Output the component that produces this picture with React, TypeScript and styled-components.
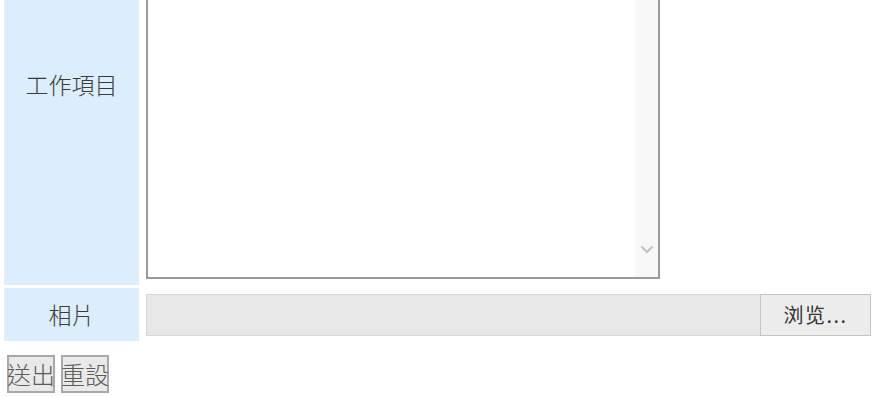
import React from "react";
import styled, { createGlobalStyle } from "styled-components";

const Global = createGlobalStyle`
  html, body { margin: 0; padding: 0; background: #ffffff; overflow: hidden; }
  body { font-family: "Noto Sans CJK TC", "Noto Sans CJK SC", "Noto Sans", sans-serif; color: #3c3c3c; }
`;

const Page = styled.div`
  margin-top: -117px;
`;

const FormGrid = styled.div`
  display: grid;
  grid-template-columns: 135px 1fr;
  grid-template-rows: 402px 53px;
  column-gap: 3px;
  row-gap: 3px;
  padding-left: 4px;
`;

const Label = styled.div`
  background: #dcedfd;
  display: flex;
  align-items: center;
  justify-content: center;
  font-size: 23px;
  font-weight: 300;
  line-height: 1;
  color: #3a3a3a;
`;

const Field = styled.div<{ $align?: string }>`
  display: flex;
  align-items: ${(p) => p.$align || "flex-start"};
  padding: 0 4px;
`;

const AreaBox = styled.div`
  width: 514px;
  height: 396px;
  box-sizing: border-box;
  border: 1px solid #9a9a9a;
  border-width: 1px 2px 2px 2px;
  display: flex;
  background: #ffffff;
`;

const Area = styled.textarea`
  flex: 1;
  border: none;
  outline: none;
  resize: none;
  background: transparent;
  overflow: hidden;
`;

const ScrollTrack = styled.div`
  width: 23px;
  background: #f8f8f8;
  display: flex;
  flex-direction: column;
  justify-content: flex-end;
  align-items: center;
  padding-bottom: 23px;
`;

const FileBox = styled.div`
  flex: 1;
  height: 42px;
  box-sizing: border-box;
  background: #e8e8e8;
  border: 1px solid #d6d6d6;
  display: flex;
  justify-content: flex-end;
`;

const BrowseButton = styled.button`
  width: 111px;
  height: 42px;
  margin: -1px -1px -1px 0;
  box-sizing: border-box;
  background: #ececec;
  border: 1px solid #c4c4c4;
  font-family: "Noto Sans CJK SC", "Noto Sans", sans-serif;
  font-size: 20px;
  letter-spacing: 1.5px;
  color: #333333;
  padding: 0;
`;

const Actions = styled.div`
  display: flex;
  gap: 6px;
  padding: 14px 0 0 7px;
`;

const ActionButton = styled.button`
  width: 48px;
  height: 38px;
  box-sizing: border-box;
  padding: 0;
  background: #e9e9e9;
  border: 2px solid #a9a9a9;
  font-family: "Noto Sans CJK TC", sans-serif;
  font-size: 24px;
  font-weight: 300;
  line-height: 1;
  color: #5a5a5a;
  overflow: visible;
  white-space: nowrap;
  display: flex;
  align-items: center;
  justify-content: center;
`;

const Chevron = () => (
  <svg width="14" height="9" viewBox="0 0 14 9">
    <path d="M1.5 1.5 L7 7 L12.5 1.5" fill="none" stroke="#c2c2c2" strokeWidth="2" />
  </svg>
);

export default function App() {
  return (
    <>
      <Global />
      <Page>
        <FormGrid>
          <Label>工作項目</Label>
          <Field>
            <AreaBox>
              <Area />
              <ScrollTrack>
                <Chevron />
              </ScrollTrack>
            </AreaBox>
          </Field>
          <Label>相片</Label>
          <Field $align="center">
            <FileBox>
              <BrowseButton>浏览...</BrowseButton>
            </FileBox>
          </Field>
        </FormGrid>
        <Actions>
          <ActionButton>送出</ActionButton>
          <ActionButton>重設</ActionButton>
        </Actions>
      </Page>
    </>
  );
}
